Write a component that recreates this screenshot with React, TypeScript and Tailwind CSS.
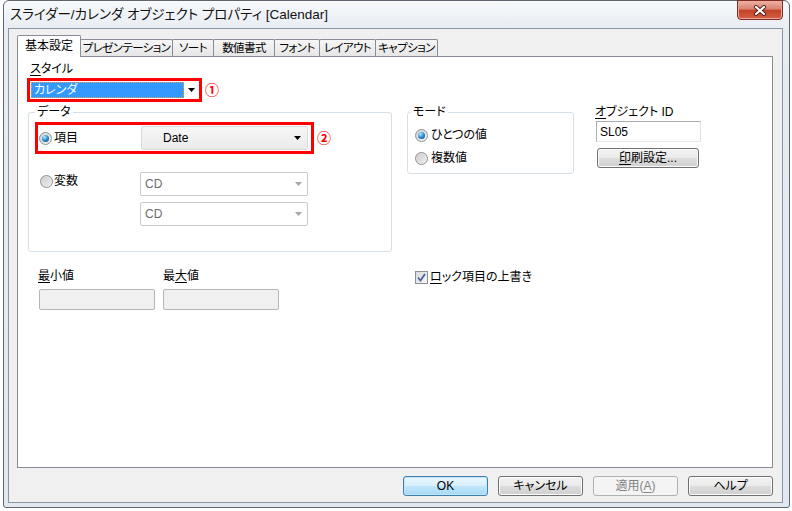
import type { ReactNode } from 'react';

const FONT =
  "font-['Liberation_Sans','Noto_Sans_CJK_JP',sans-serif] [font-feature-settings:'palt']";

function Radio({ checked }: { checked?: boolean }) {
  return (
    <span className="flex size-[13px] shrink-0 items-center justify-center rounded-full border border-[#8e8f8f] bg-[linear-gradient(135deg,#d2d2d2,#f4f4f4)]">
      {checked ? (
        <span className="size-[7px] rounded-full bg-[radial-gradient(circle_at_35%_30%,#b7ecff,#2a8ad0_50%,#0b3f77)]" />
      ) : (
        <span className="size-[9px] rounded-full bg-[linear-gradient(135deg,#cfcfcf,#ececec)]" />
      )}
    </span>
  );
}

function Arrow({ gray }: { gray?: boolean }) {
  return (
    <svg width="7" height="4" viewBox="0 0 7 4" className="shrink-0">
      <polygon points="0,0 7,0 3.5,4" fill={gray ? '#a6a6a6' : '#000'} />
    </svg>
  );
}

function DisabledCombo({ text }: { text: string }) {
  return (
    <div className="flex h-[24px] w-[168px] items-center rounded-[2px] border border-[#c9c9c9] bg-white pl-[4px] pr-[5px] text-[#6d6d6d]">
      <span className="flex-1">{text}</span>
      <Arrow gray />
    </div>
  );
}

function WinButton({
  children,
  width,
  kind = 'normal',
}: {
  children: ReactNode;
  width: string;
  kind?: 'normal' | 'default' | 'disabled';
}) {
  const look =
    kind === 'default'
      ? 'border-[#3c7fb1] bg-[linear-gradient(#eaf6fd_0%,#d9f0fc_48%,#bee6fd_52%,#a7d9f5_100%)] shadow-[inset_0_0_0_1px_#c4e5f6]'
      : kind === 'disabled'
        ? 'border-[#adb2b5] bg-[#f4f4f4] text-[#838383]'
        : 'border-[#707070] bg-[linear-gradient(#f2f2f2_0%,#ebebeb_48%,#dddddd_52%,#cfcfcf_100%)] shadow-[inset_0_0_0_1px_#fcfcfc]';
  return (
    <div
      className={`flex h-[20px] items-center justify-center whitespace-nowrap rounded-[3px] border leading-[14px] ${width} ${look}`}
    >
      {children}
    </div>
  );
}

const tabs = [
  { label: 'プレゼンテーション', w: 'w-[93px]' },
  { label: 'ソート', w: 'w-[42px]' },
  { label: '数値書式', w: 'w-[62px]' },
  { label: 'フォント', w: 'w-[46px]' },
  { label: 'レイアウト', w: 'w-[57px]' },
  { label: 'キャプション', w: 'w-[63px]' },
];

export default function App() {
  return (
    <div className={`h-[511px] w-[792px] overflow-hidden bg-white text-[12px] leading-[14px] text-black ${FONT}`}>
      {/* window frame */}
      <div className="ml-[3px] flex h-[508px] w-[787px] flex-col rounded-t-[6px] rounded-b-[3px] border border-[#5f6670] bg-[linear-gradient(#f7f9fb_0%,#e6ecf2_6%,#e2e8ef_100%)]">
        <div className="flex h-[27px] items-start">
          <span className="flex-1 whitespace-nowrap pl-[6px] pt-[6px] text-[13.5px] leading-[16px] text-[#111]">
            スライダー/カレンダ オブジェクト プロパティ [Calendar]
          </span>
          <div className="-mt-px mr-[6px] flex h-[20px] w-[46px] items-center justify-center rounded-b-[4px] border border-[#7a2d22] bg-[linear-gradient(#ecb3a6_0%,#d9806d_45%,#c4412a_52%,#d45f42_100%)] shadow-[inset_0_0_0_1px_#eea99a]">
            <svg width="14" height="11" viewBox="0 0 14 11">
              <path d="M3 2 L11 9 M11 2 L3 9" stroke="#4a1a14" strokeWidth="4" strokeLinecap="round" />
              <path d="M3 2 L11 9 M11 2 L3 9" stroke="#fff" strokeWidth="2.2" strokeLinecap="round" />
            </svg>
          </div>
        </div>

        {/* client area */}
        <div className="mb-[4px] ml-[4px] mr-[6px] flex flex-1 flex-col border border-[#8d97a3] bg-[#f0f0f0]">
          {/* tabs */}
          <div className="relative z-10 -mb-px mt-[6px] flex h-[22px] items-end pl-[8px]">
            <div className="flex h-[22px] w-[64px] items-start justify-center whitespace-nowrap rounded-t-[2px] border border-b-0 border-[#898c95] bg-white pt-[3px]">
              基本設定
            </div>
            {tabs.map((t) => (
              <div
                key={t.label}
                className={`-ml-px mb-px flex h-[17px] items-center justify-center overflow-hidden whitespace-nowrap rounded-t-[2px] border border-b-0 border-[#898c95] bg-[linear-gradient(#f6f6f6,#e6e6e6)] text-[11.5px] tracking-[-0.6px] ${t.w}`}
              >
                {t.label}
              </div>
            ))}
          </div>

          {/* tab panel */}
          <div className="ml-[8px] flex h-[412px] w-[756px] flex-col border border-[#898c95] bg-white pt-[5px]">
            <div className="pl-[12px]">
              <span className="underline underline-offset-2">ス</span>タイル
            </div>
            <div className="mt-[2px] flex items-center gap-[3px] pl-[9px]">
              <div className="flex h-[24px] w-[175px] items-center border-[3px] border-[#ff0000] bg-white">
                <div className="ml-px flex h-[16px] w-[153px] items-center border border-dotted border-[#e5a050] bg-[#3399ff] pl-[2px] text-white">
                  カレンダ
                </div>
                <div className="flex flex-1 justify-center">
                  <Arrow />
                </div>
              </div>
              <span className="text-[14px] font-bold leading-[14px] text-[#ff0000]">①</span>
            </div>

            {/* middle row */}
            <div className="mt-[3px] flex items-start pl-[10px]">
              <fieldset className="h-[147px] w-[364px] rounded-[3px] border border-[#d5dfe5]">
                <legend className="ml-[6px] px-[2px] leading-[14px]">データ</legend>
                <div className="ml-[6px] mt-[3px] flex items-center gap-[3px]">
                  <div className="flex h-[32px] w-[279px] items-center border-[3px] border-[#ff0000]">
                    <span className="ml-px">
                      <Radio checked />
                    </span>
                    <span className="ml-[2px]">項目</span>
                    <div className="ml-auto mr-[3px] flex h-[24px] w-[167px] items-center rounded-[2px] border border-[#d9d9d9] bg-[linear-gradient(#f6f6f6,#ebebeb)] pl-[21px] pr-[6px]">
                      <span className="flex-1">Date</span>
                      <Arrow />
                    </div>
                  </div>
                  <span className="text-[14px] font-bold leading-[14px] text-[#ff0000]">②</span>
                </div>
                <div className="mt-[18px] flex items-start pl-[11px]">
                  <div className="mt-[2px] flex w-[100px] items-center gap-[1px]">
                    <Radio />
                    <span>変数</span>
                  </div>
                  <div className="flex flex-col gap-[6px]">
                    <DisabledCombo text="CD" />
                    <DisabledCombo text="CD" />
                  </div>
                </div>
              </fieldset>

              <fieldset className="ml-[15px] h-[69px] w-[167px] rounded-[3px] border border-[#d5dfe5]">
                <legend className="ml-[3px] px-[2px] leading-[14px]">モード</legend>
                <div className="mt-[9px] flex h-[14px] items-center gap-[3px] pl-[7px]">
                  <Radio checked />
                  <span>ひとつの値</span>
                </div>
                <div className="mt-[9px] flex h-[14px] items-center gap-[3px] pl-[7px]">
                  <Radio />
                  <span>複数値</span>
                </div>
              </fieldset>

              <div className="ml-[21px] flex w-[106px] flex-col">
                <div className="h-[14px] whitespace-nowrap">
                  <span className="underline underline-offset-2">オ</span>ブジェクト ID
                </div>
                <div className="ml-px mt-[2px] flex h-[21px] w-[105px] items-center border border-[#abadb3] border-b-[#e3e9ef] border-r-[#dbdfe6] bg-white pl-[3px]">
                  SL05
                </div>
                <div className="ml-[2px] mt-[6px]">
                  <WinButton width="w-[102px]">
                    <span className="underline underline-offset-2">印</span>刷設定...
                  </WinButton>
                </div>
              </div>
            </div>

            {/* min / max row */}
            <div className="mt-[17px] flex items-start pl-[20px]">
              <div className="flex w-[117px] flex-col">
                <span className="h-[14px]">
                  <span className="underline underline-offset-2">最</span>小値
                </span>
                <div className="ml-px mt-[6px] h-[21px] w-[116px] rounded-[2px] border border-[#b5b5b5] bg-[#f0f0f0]" />
              </div>
              <div className="ml-[8px] flex w-[116px] flex-col">
                <span className="h-[14px]">
                  最<span className="underline underline-offset-2">大</span>値
                </span>
                <div className="mt-[6px] h-[21px] w-[116px] rounded-[2px] border border-[#b5b5b5] bg-[#f0f0f0]" />
              </div>
              <div className="ml-[136px] mt-[1px] flex items-center gap-[2px]">
                <span className="flex size-[13px] items-center justify-center border border-[#8e8f8f] bg-[linear-gradient(135deg,#d6d9de,#f7f8f9)]">
                  <svg width="9" height="9" viewBox="0 0 9 9">
                    <path d="M1 4.5 L3.5 7.5 L8 1" fill="none" stroke="#4d5f99" strokeWidth="1.8" />
                  </svg>
                </span>
                <span className="whitespace-nowrap">
                  <span className="underline underline-offset-2">ロ</span>ック項目の上書き
                </span>
              </div>
            </div>
          </div>

          {/* bottom buttons */}
          <div className="mt-[8px] flex justify-end gap-[10px] pr-[9px]">
            <WinButton width="w-[85px]" kind="default">
              OK
            </WinButton>
            <WinButton width="w-[85px]">キャンセル</WinButton>
            <WinButton width="w-[85px]" kind="disabled">
              適用(<span className="underline underline-offset-2">A</span>)
            </WinButton>
            <WinButton width="w-[85px]">ヘルプ</WinButton>
          </div>
        </div>
      </div>
    </div>
  );
}
